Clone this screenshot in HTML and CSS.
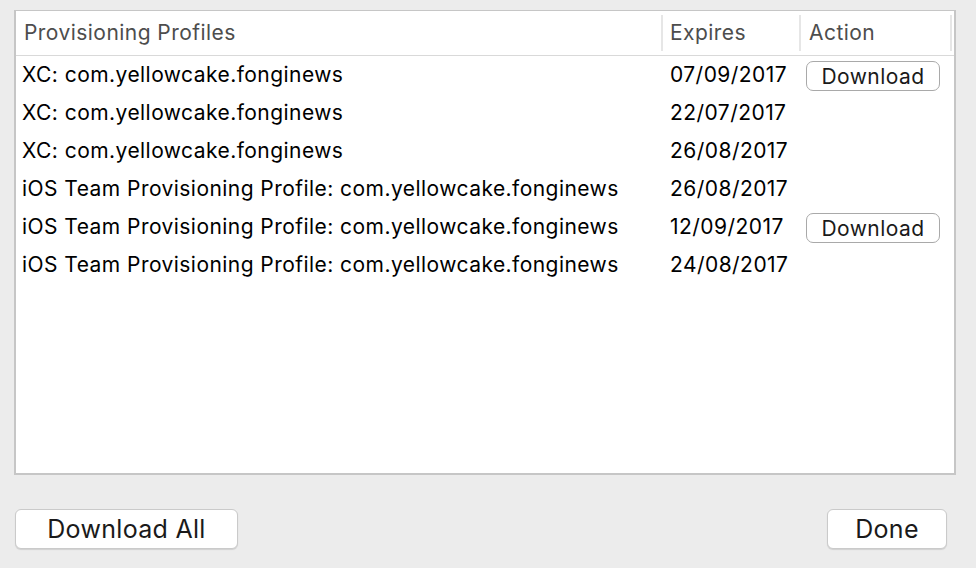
FILE: index.html
```html
<!DOCTYPE html>
<html>
<head>
<meta charset="utf-8">
<link rel="stylesheet" href="styles.css">
</head>
<body>
<div class="dialog">
  <div class="table">
    <div class="head">
      <div class="hcell c1">Provisioning Profiles</div>
      <div class="hcell c2">Expires</div>
      <div class="hcell c3">Action</div>
    </div>
    <div class="row"><div class="cell c1">XC: com.yellowcake.fonginews</div><div class="cell c2">07/09/2017</div><div class="cell c3"><button class="rbtn">Download</button></div></div>
    <div class="row"><div class="cell c1">XC: com.yellowcake.fonginews</div><div class="cell c2">22/07/2017</div><div class="cell c3"></div></div>
    <div class="row"><div class="cell c1">XC: com.yellowcake.fonginews</div><div class="cell c2">26/08/2017</div><div class="cell c3"></div></div>
    <div class="row"><div class="cell c1">iOS Team Provisioning Profile: com.yellowcake.fonginews</div><div class="cell c2">26/08/2017</div><div class="cell c3"></div></div>
    <div class="row"><div class="cell c1">iOS Team Provisioning Profile: com.yellowcake.fonginews</div><div class="cell c2">12/09/2017</div><div class="cell c3"><button class="rbtn">Download</button></div></div>
    <div class="row"><div class="cell c1">iOS Team Provisioning Profile: com.yellowcake.fonginews</div><div class="cell c2">24/08/2017</div><div class="cell c3"></div></div>
  </div>
  <div class="footer">
    <button class="btn all">Download All</button>
    <button class="btn done">Done</button>
  </div>
</div>
</body>
</html>
```
FILE: styles.css
```css
html, body {
  margin: 0;
  padding: 0;
  background: #ececec;
  font-family: Inter, "Liberation Sans", Arial, sans-serif;
}
.dialog {
  width: 976px;
  height: 568px;
  padding: 10px 0 0 14px;
  box-sizing: border-box;
}
.table {
  width: 942px;
  height: 465px;
  box-sizing: border-box;
  background: #fff;
  border: 2px solid #c6c6c6;
  border-top: 1px solid #c6c6c6;
}
.head {
  display: flex;
  height: 45px;
  box-sizing: border-box;
  border-bottom: 1px solid #d9d9d9;
  align-items: center;
}
.hcell {
  font-size: 21px;
  letter-spacing: 0.45px;
  color: #4d4d4d;
  height: 36px;
  line-height: 36px;
  box-sizing: border-box;
}
.head .c1 { width: 647px; padding-left: 8px; border-right: 2px solid #e6e6e6; }
.head .c2 { width: 138px; padding-left: 7px; border-right: 2px solid #e6e6e6; }
.head .c3 { width: 151px; padding-left: 8px; border-right: 2px solid #e6e6e6; }
.row {
  display: flex;
  height: 38px;
  padding-bottom: 2px;
  box-sizing: border-box;
  align-items: center;
}
.cell {
  font-size: 21px;
  letter-spacing: 0.45px;
  color: #000;
  box-sizing: border-box;
  white-space: nowrap;
}
.row .c1 { width: 647px; padding-left: 6px; }
.row .c2 { width: 138px; padding-left: 7px; }
.row .c3 { width: 151px; padding-left: 5px; }
.rbtn {
  display: block;
  width: 134px;
  height: 30px;
  margin-top: 4px;
  font-family: Inter, "Liberation Sans", Arial, sans-serif;
  font-size: 21px;
  letter-spacing: 0.45px;
  color: #1a1a1a;
  background: #fff;
  border: 1px solid #a9a9a9;
  border-radius: 7px;
  padding: 0;
}
.footer {
  display: flex;
  justify-content: space-between;
  width: 932px;
  margin-top: 34px;
  margin-left: 1px;
}
.btn {
  height: 40px;
  font-family: Inter, "Liberation Sans", Arial, sans-serif;
  font-size: 25px;
  letter-spacing: 0.3px;
  color: #1a1a1a;
  background: #fff;
  border: 1px solid #cacaca;
  border-radius: 6px;
  box-shadow: 0 1px 1px rgba(0,0,0,0.12);
  padding: 0;
}
.all { width: 223px; }
.done { width: 120px; }
```
